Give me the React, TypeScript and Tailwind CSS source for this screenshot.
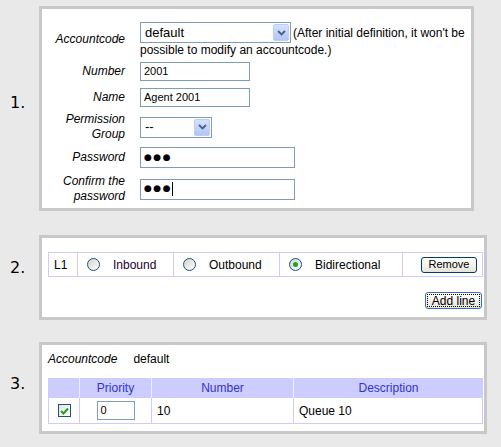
import React from "react";

function Chevron() {
  return (
    <svg width="9" height="6" viewBox="0 0 9 6">
      <path d="M1 1 L4.5 4.5 L8 1" stroke="#4d6185" strokeWidth="1.8" fill="none" />
    </svg>
  );
}

function Arrow() {
  return (
    <div className="m-[1px] flex w-[16px] items-center justify-center rounded-[2px] border border-[#b9cdf7] bg-gradient-to-b from-[#d6e2fd] to-[#b1c6f5]">
      <Chevron />
    </div>
  );
}

function Radio({ checked }: { checked?: boolean }) {
  return (
    <span className="inline-flex h-[13px] w-[13px] shrink-0 items-center justify-center rounded-full border border-[#1c5180] bg-gradient-to-br from-[#d4d4ce] to-white">
      {checked && <span className="h-[5px] w-[5px] rounded-full bg-[#21a121]" />}
    </span>
  );
}

function Label({ children }: { children: React.ReactNode }) {
  return <div className="w-[77px] text-right text-[12px] italic leading-[15px] text-black">{children}</div>;
}

export default function App() {
  return (
    <div className="min-h-[447px] w-[501px] bg-[#e9e9e9] pt-[6px] font-['Liberation_Sans',Arial,sans-serif] text-black">
      {/* 1 */}
      <div className="flex">
        <div className="flex w-[39px] items-center pb-[11px] pl-[10px] font-['DejaVu_Sans',sans-serif] text-[16px] text-black">1.</div>
        <div className="h-[205px] w-[435px] border-[3px] border-[#c8c8c8] bg-white pl-[6px] pt-[13px]">
          <div className="flex h-[35px] items-center">
            <Label>Accountcode</Label>
            <div className="ml-[15px] flex flex-col self-start">
              <div className="flex items-center">
                <div className="flex h-[21px] w-[151px] border border-[#7f9db9] bg-white">
                  <div className="flex flex-1 items-center pl-[4px] text-[13px]">default</div>
                  <Arrow />
                </div>
                <span className="ml-[2px] text-[12px]">(After initial definition, it won't be</span>
              </div>
              <div className="text-[12px] leading-[14px]">possible to modify an accountcode.)</div>
            </div>
          </div>
          <div className="mt-[5px] flex h-[19px] items-center">
            <Label>Number</Label>
            <div className="ml-[15px] flex h-[19px] w-[110px] items-center border border-[#7f9db9] pl-[3px] text-[11px]">2001</div>
          </div>
          <div className="mt-[7px] flex h-[19px] items-center">
            <Label>Name</Label>
            <div className="ml-[15px] flex h-[19px] w-[110px] items-center border border-[#7f9db9] pl-[3px] text-[11px]">Agent 2001</div>
          </div>
          <div className="mt-[5px] flex h-[30px] items-center">
            <Label>
              Permission
              <br />
              Group
            </Label>
            <div className="ml-[15px] flex h-[21px] w-[72px] border border-[#7f9db9] bg-white">
              <div className="flex flex-1 items-center pl-[4px] text-[13px]">--</div>
              <Arrow />
            </div>
          </div>
          <div className="mt-[5px] flex h-[21px] items-center">
            <Label>Password</Label>
            <div className="ml-[15px] flex h-[21px] w-[155px] items-center border border-[#7f9db9] pl-[3px] font-['DejaVu_Sans',sans-serif] text-[9px] tracking-[1.5px]">●●●</div>
          </div>
          <div className="mt-[6px] flex h-[30px] items-center">
            <Label>
              Confirm the
              <br />
              password
            </Label>
            <div className="ml-[15px] flex h-[21px] w-[155px] items-center border border-[#7f9db9] pl-[3px] font-['DejaVu_Sans',sans-serif] text-[9px] tracking-[1.5px]">
              ●●●<span className="h-[14px] w-[1px] bg-black" />
            </div>
          </div>
        </div>
      </div>

      {/* 2 */}
      <div className="mt-[24px] flex">
        <div className="flex w-[39px] items-center pb-[19px] pl-[10px] font-['DejaVu_Sans',sans-serif] text-[16px] text-black">2.</div>
        <div className="h-[85px] w-[448px] border-[3px] border-[#c8c8c8] bg-white pl-[6px] pr-[1px] pt-[14px]">
          <div className="flex h-[25px] w-[435px] border border-[#ccccff] text-[12px]">
            <div className="flex w-[28px] items-center pl-[5px]">L1</div>
            <div className="flex w-[96px] items-center border-l border-[#ccccff] pl-[9px]">
              <Radio />
              <span className="ml-[13px] text-[#220033]">Inbound</span>
            </div>
            <div className="flex w-[106px] items-center border-l border-[#ccccff] pl-[9px]">
              <Radio />
              <span className="ml-[13px]">Outbound</span>
            </div>
            <div className="flex w-[123px] items-center border-l border-[#ccccff] pl-[9px]">
              <Radio checked />
              <span className="ml-[13px]">Bidirectional</span>
            </div>
            <div className="flex w-[80px] items-center border-l border-[#ccccff] pl-[18px]">
              <button className="flex h-[16px] w-[56px] items-center justify-center rounded-[3px] border border-[#003c74] bg-gradient-to-b from-white to-[#e6e5dc] text-[11px] leading-none">
                Remove
              </button>
            </div>
          </div>
          <div className="mt-[15px] flex w-[435px] justify-end pr-[1px]">
            <button className="flex h-[17px] w-[57px] items-center justify-center rounded-[3px] border border-[#3c6eb4] bg-gradient-to-b from-white to-[#e6e5dc] p-[1px] text-[12px] leading-none">
              <span className="flex h-full w-full items-center justify-center border border-dotted border-black">Add line</span>
            </button>
          </div>
        </div>
      </div>

      {/* 3 */}
      <div className="mt-[22px] flex">
        <div className="flex w-[39px] items-center pb-[8px] pl-[10px] font-['DejaVu_Sans',sans-serif] text-[16px] text-black">3.</div>
        <div className="h-[92px] w-[448px] border-[3px] border-[#c8c8c8] bg-white pl-[6px] pt-[7px]">
          <div className="flex text-[12px] leading-[14px]">
            <span className="italic">Accountcode</span>
            <span className="ml-[16px]">default</span>
          </div>
          <div className="mt-[12px] w-[435px] text-[12px]">
            <div className="flex h-[20px] bg-[#ccccff] text-[#3333cc]">
              <div className="w-[31px]" />
              <div className="flex w-[72px] items-center justify-center border-l border-[#eeeeff]">Priority</div>
              <div className="flex w-[142px] items-center justify-center border-l border-[#eeeeff]">Number</div>
              <div className="flex w-[190px] items-center justify-center border-l border-[#eeeeff]">Description</div>
            </div>
            <div className="flex h-[26px] border-x border-b border-[#ccccff]">
              <div className="flex w-[30px] items-center justify-center">
                <span className="flex h-[13px] w-[13px] items-center justify-center border border-[#1c5180] bg-gradient-to-br from-[#e4e4de] to-white">
                  <svg width="9" height="8" viewBox="0 0 9 8">
                    <path d="M1 4 L3.5 6.5 L8 1.5" stroke="#21a121" strokeWidth="2" fill="none" />
                  </svg>
                </span>
              </div>
              <div className="flex w-[72px] items-center justify-center border-l border-[#ccccff]">
                <div className="flex h-[19px] w-[38px] items-center border border-[#7f9db9] pl-[3px] text-[11px]">0</div>
              </div>
              <div className="flex w-[142px] items-center border-l border-[#ccccff] pl-[5px]">10</div>
              <div className="flex w-[189px] items-center border-l border-[#ccccff] pl-[5px]">Queue 10</div>
            </div>
          </div>
        </div>
      </div>
    </div>
  );
}
